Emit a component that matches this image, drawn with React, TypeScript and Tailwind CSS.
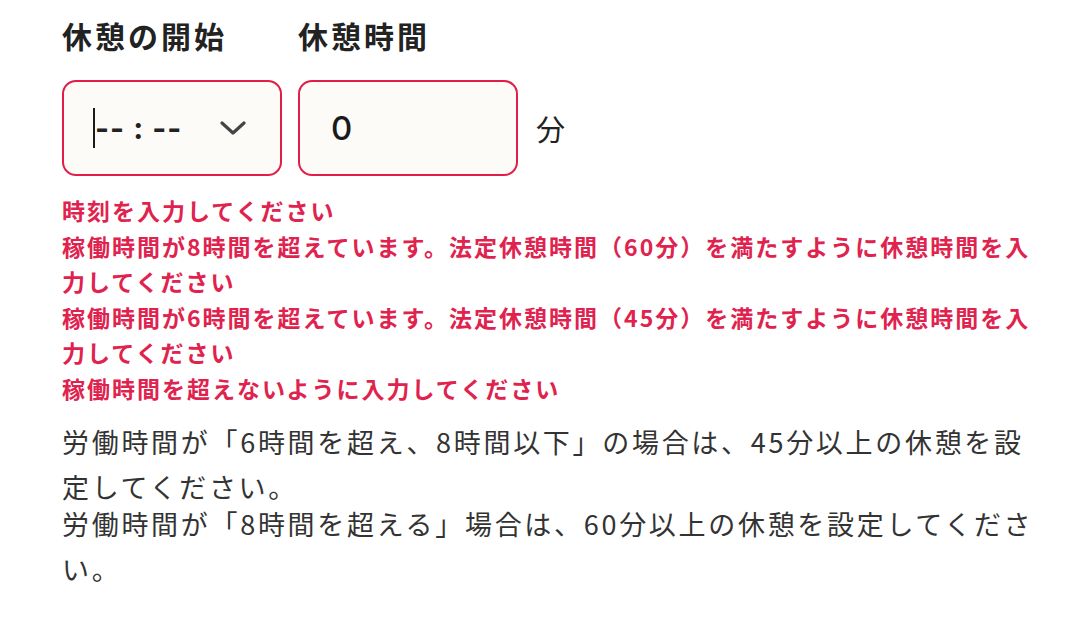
import React from "react"

const errors = [
  "時刻を入力してください",
  "稼働時間が8時間を超えています。法定休憩時間（60分）を満たすように休憩時間を入力してください",
  "稼働時間が6時間を超えています。法定休憩時間（45分）を満たすように休憩時間を入力してください",
  "稼働時間を超えないように入力してください",
]

function Chevron() {
  return (
    <svg width="26" height="14" viewBox="0 0 26 14" fill="none">
      <polyline
        points="2,2 13,12 24,2"
        stroke="#444444"
        strokeWidth="3.2"
        strokeLinecap="round"
        strokeLinejoin="round"
      />
    </svg>
  )
}

export default function App() {
  return (
    <div className="min-h-screen bg-white pl-[62px] pr-[23px] pt-[13px] font-['Noto_Sans_CJK_JP','Noto_Sans',sans-serif] text-[#222]">
      {/* labels */}
      <div className="flex gap-4">
        <div className="w-[220px] text-[30px] font-bold leading-[45px] tracking-[0.1em] text-[#222]">休憩の開始</div>
        <div className="w-[220px] text-[30px] font-bold leading-[45px] tracking-[0.1em] text-[#222]">休憩時間</div>
      </div>

      {/* inputs */}
      <div className="mt-[22px] flex items-center gap-4">
        <div className="flex h-[96px] w-[220px] items-center justify-between rounded-[14px] border-2 border-[#e11d48] bg-[#fcfbf8] pl-[29px] pr-[34px]">
          <div className="flex items-center">
            <span className="h-[40px] w-[2px] bg-[#1a1a1a]" />
            <span className="whitespace-pre font-['Inter',sans-serif] text-[30px] font-bold leading-none tracking-[1px] text-[#222]">
              {"-- : --"}
            </span>
          </div>
          <Chevron />
        </div>
        <div className="flex h-[96px] w-[220px] items-center rounded-[14px] border-2 border-[#e11d48] bg-[#fcfbf8] pl-[31px]">
          <span className="font-['Inter',sans-serif] text-[33px] font-medium leading-none text-[#1a1a1a]">0</span>
        </div>
        <span className="ml-[2px] text-[29px] leading-none text-[#222]">分</span>
      </div>

      {/* errors */}
      <div className="mt-[17px]">
        {errors.map((e) => (
          <p key={e} className="text-[23px] font-bold leading-[35.6px] tracking-[2px] text-[#e0234e]">
            {e}
          </p>
        ))}
      </div>

      {/* notes */}
      <div className="mt-[12px] text-[27px] leading-[45px] tracking-[0.1em] text-[#333]">
        <p>労働時間が「6時間を超え、8時間以下」の場合は、45分以上の休憩を設定してください。</p>
        <p className="-mt-[8px]">労働時間が「8時間を超える」場合は、60分以上の休憩を設定してください。</p>
      </div>
    </div>
  )
}
